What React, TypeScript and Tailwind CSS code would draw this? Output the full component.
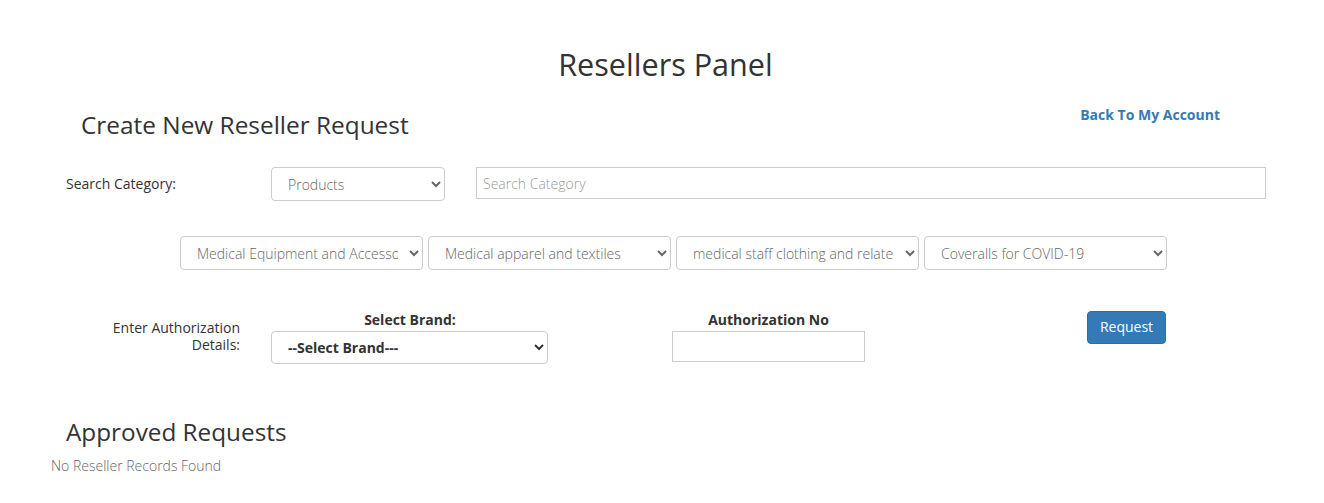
import React from "react";

const selCls =
  "h-[34px] border border-[#ccc] rounded-[4px] bg-white pl-[12px] pr-[8px] text-[14px] font-light text-[#666] font-['Open_Sans'] outline-none";

export default function App() {
  return (
    <div className="font-['Open_Sans',sans-serif] text-[14px] text-[#333] bg-white w-[1324px] h-[503px] overflow-hidden">
      <h1 className="pt-[48px] text-center text-[30.6px] leading-[33px] font-normal pl-[7px]">
        Resellers Panel
      </h1>

      <div className="flex items-start mt-[21px]">
        <h2 className="ml-[81px] mt-[10px] text-[24.4px] leading-[26px] font-normal">
          Create New Reseller Request
        </h2>
        <a
          href="#"
          className="ml-auto mr-[104px] mt-[3px] text-[14px] leading-[20px] font-bold text-[#337ab7]"
        >
          Back To My Account
        </a>
      </div>

      <div className="flex items-start mt-[29px]">
        <div className="w-[271px] pl-[66px] leading-[34px]">Search Category:</div>
        <select className={selCls + " w-[174px] pl-[12px]"} defaultValue="Products">
          <option>Products</option>
          <option>Brands</option>
        </select>
        <input
          placeholder="Search Category"
          className="ml-[31px] w-[790px] h-[32px] border border-[#ccc] px-[6px] text-[14px] font-light placeholder:text-[#999] outline-none"
        />
      </div>

      <div className="flex mt-[35px] pl-[180px] gap-[5px]">
        <select className={selCls + " w-[243px]"} defaultValue="a">
          <option value="a">Medical Equipment and Accessories</option>
        </select>
        <select className={selCls + " w-[243px]"} defaultValue="b">
          <option value="b">Medical apparel and textiles</option>
        </select>
        <select className={selCls + " w-[243px]"} defaultValue="c">
          <option value="c">medical staff clothing and related items</option>
        </select>
        <select className={selCls + " w-[243px]"} defaultValue="d">
          <option value="d">Coveralls for COVID-19</option>
        </select>
      </div>

      <div className="flex items-start mt-[41px]">
        <div className="ml-[100px] w-[140px] mt-[8px] text-right leading-[17px]">
          Enter Authorization Details:
        </div>
        <div className="ml-[31px] w-[277px] flex flex-col">
          <div className="text-center font-bold leading-[20px] -mt-[1px] mb-[1px] pl-[1px]">Select Brand:</div>
          <select
            className="h-[33px] border border-[#ccc] rounded-[4px] bg-white pl-[12px] pr-[8px] text-[14px] font-bold text-[#333] outline-none"
            defaultValue="x"
          >
            <option value="x">--Select Brand---</option>
          </select>
        </div>
        <div className="ml-[124px] w-[193px] flex flex-col">
          <div className="text-center font-bold leading-[20px] -mt-[1px] mb-[1px]">Authorization No</div>
          <input className="h-[31px] border border-[#ccc] px-[6px] outline-none" />
        </div>
        <button className="ml-[222px] w-[79px] h-[33px] rounded-[4px] bg-[#337ab7] border border-[#2e6da4] text-white text-[14px] leading-[29px] pb-[2px]">
          Request
        </button>
      </div>

      <h2 className="mt-[55px] pl-[66px] text-[24.3px] leading-[26px] font-normal">
        Approved Requests
      </h2>
      <div className="mt-[12px] pl-[51px] text-[14px] font-light leading-[18px] text-[#666]">
        No Reseller Records Found
      </div>
    </div>
  );
}
